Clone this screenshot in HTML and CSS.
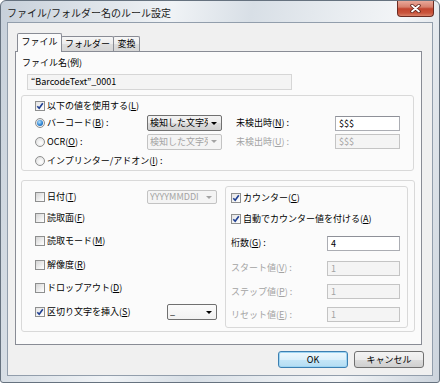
FILE: index.html
```html
<!DOCTYPE html>
<html>
<head>
    <meta charset="utf-8">
    <title>ファイル/フォルダー名のルール設定</title>
    <link rel="stylesheet" href="styles.css">
</head>
<body>
<div class="window">
    <div class="titlebar">
        <span class="title">ファイル/フォルダー名のルール設定</span>
        <span class="close">
            <svg width="11" height="9" viewBox="0 0 11 9">
                <path d="M2 1.5 L9 7.5 M9 1.5 L2 7.5" stroke="#5a1e16" stroke-width="3.4" stroke-linecap="round"/>
                <path d="M2 1.5 L9 7.5 M9 1.5 L2 7.5" stroke="#fff" stroke-width="1.8" stroke-linecap="round"/>
            </svg>
        </span>
    </div>
    <div class="client">
        <div class="tabs">
            <span class="tab active">ファイル</span>
            <span class="tab t2">フォルダー</span>
            <span class="tab t3">変換</span>
        </div>
        <div class="panel">
            <div class="caption">ファイル名(例)</div>
            <div class="sample">“BarcodeText”_0001</div>

            <div class="group g1">
                <label class="chk on wide"><i class="box"><svg width="8" height="8" viewBox="0 0 8 8"><path d="M1.3 4.2 L3.2 6.3 L6.8 1.2" fill="none" stroke="#1f3f92" stroke-width="1.6"/></svg></i>以下の値を使用する(<u>L</u>)</label>

                <label class="chk"><i class="rad on"></i>バーコード(<u>B</u>) :</label>
                <span class="sel"><span class="val">検知した文字列</span><i class="arr"></i></span>
                <span class="lbl">未検出時(<u>N</u>) :</span>
                <span class="inp">$$$</span>

                <label class="chk"><i class="rad"></i>OCR(<u>O</u>) :</label>
                <span class="sel off"><span class="val">検知した文字列</span><i class="arr"></i></span>
                <span class="lbl off">未検出時(<u>U</u>) :</span>
                <span class="inp off">$$$</span>

                <label class="chk wide"><i class="rad"></i>インプリンター/アドオン(<u>I</u>) :</label>
            </div>

            <div class="group g2">
                <div class="left">
                    <label class="chk"><i class="box"></i>日付(<u>T</u>)</label>
                    <span class="sel off short"><span class="val">YYYYMMDDI</span><i class="arr"></i></span>
                    <label class="chk wide"><i class="box"></i>読取面(<u>F</u>)</label>
                    <label class="chk wide"><i class="box"></i>読取モード(<u>M</u>)</label>
                    <label class="chk wide"><i class="box"></i>解像度(<u>R</u>)</label>
                    <label class="chk wide"><i class="box"></i>ドロップアウト(<u>D</u>)</label>
                    <label class="chk on"><i class="box"><svg width="8" height="8" viewBox="0 0 8 8"><path d="M1.3 4.2 L3.2 6.3 L6.8 1.2" fill="none" stroke="#1f3f92" stroke-width="1.6"/></svg></i>区切り文字を挿入(<u>S</u>)</label>
                    <span class="sel sep"><span class="val">_</span><i class="arr"></i></span>
                </div>

                <div class="group counter">
                    <label class="chk on wide"><i class="box"><svg width="8" height="8" viewBox="0 0 8 8"><path d="M1.3 4.2 L3.2 6.3 L6.8 1.2" fill="none" stroke="#1f3f92" stroke-width="1.6"/></svg></i>カウンター(<u>C</u>)</label>
                    <label class="chk on wide"><i class="box"><svg width="8" height="8" viewBox="0 0 8 8"><path d="M1.3 4.2 L3.2 6.3 L6.8 1.2" fill="none" stroke="#1f3f92" stroke-width="1.6"/></svg></i>自動でカウンター値を付ける(<u>A</u>)</label>
                    <span class="lbl">桁数(<u>G</u>) :</span>
                    <span class="inp">4</span>
                    <span class="lbl off">スタート値(<u>V</u>) :</span>
                    <span class="inp off">1</span>
                    <span class="lbl off">ステップ値(<u>P</u>) :</span>
                    <span class="inp off">1</span>
                    <span class="lbl off">リセット値(<u>E</u>) :</span>
                    <span class="inp off">1</span>
                </div>
            </div>
        </div>
        <div class="buttons">
            <span class="btn default">OK</span>
            <span class="btn">キャンセル</span>
        </div>
    </div>
</div>
</body>
</html>
```

FILE: styles.css
```css
*{margin:0;padding:0;box-sizing:border-box;}
body{background:#fff;font:9px/12px "Noto Sans CJK JP","Noto Sans",sans-serif;color:#000;}
u{text-decoration:underline;text-underline-offset:1px;}

.window{
    width:440px;
    height:383px;
    border:1px solid #66727f;
    border-radius:6px 6px 3px 3px;
    background:linear-gradient(100deg,#c7d0da 0%,#dde3e9 18%,#f0f3f6 34%,#d8dfe6 50%,#e9edf1 68%,#f3f5f7 80%,#ccd4dd 100%);
    padding:0 6px 6px;
    display:flex;
    flex-direction:column;
}
.titlebar{height:21px;display:flex;justify-content:space-between;align-items:flex-start;}
.title{font-size:10px;line-height:12px;padding-top:6px;color:#1a1a1a;}
.close{
    width:37px;
    height:16px;
    margin-right:-1px;
    border:1px solid #6b2b22;
    border-top:none;
    border-radius:0 0 4px 4px;
    background:linear-gradient(#e9a899 0%,#d7806d 40%,#c2452f 52%,#c9543c 80%,#d9826a 100%);
    display:flex;
    align-items:center;
    justify-content:center;
}

.client{
    flex:1;
    border:1px solid #929eac;
    background:#f0f0f0;
    display:flex;
    flex-direction:column;
}
.tabs{display:flex;align-items:flex-end;height:18px;margin:10px 0 0 9px;position:relative;z-index:1;}
.tab{
    height:15px;
    border:1px solid #898c95;
    border-bottom:none;
    background:linear-gradient(#f7f7f7,#ececec 50%,#dedede 51%,#d6d6d6);
    text-align:center;
    line-height:13px;
    border-radius:2px 2px 0 0;
}
.tab.active{width:45px;height:19px;margin-bottom:-1px;background:#fbfbfb;line-height:16px;}
.t2{width:53px;margin-left:-1px;}
.t3{width:27px;margin-left:-1px;}

.panel{
    margin:0 10px 0 7px;
    height:294px;
    border:1px solid #898c95;
    background:#fbfbfb;
    padding:4px 0 0 5px;
}
.caption{height:14px;line-height:14px;padding-left:1px;}
.sample{
    margin:4px 0 0 6px;
    width:265px;
    height:16px;
    border:1px solid #d6d6d6;
    background:#f4f4f4;
    padding-left:3px;
    line-height:14px;
}
.group{border:1px solid #d9d9d9;border-radius:3px;}
.g1{
    margin-top:5px;
    width:393px;
    height:76px;
    padding:2px 0 0 13px;
    display:grid;
    grid-template-columns:112px 89px 99px 65px;
    grid-template-rows:16px 18px 19px 19px;
    align-items:center;
}
.wide{grid-column:1 / -1;}

.chk{display:flex;align-items:center;white-space:nowrap;}
.box{
    width:10px;
    height:10px;
    margin-right:2px;
    border:1px solid #8e8f8f;
    background:linear-gradient(135deg,#d4d4d4,#f4f4f4 70%,#fff);
    display:flex;
    align-items:center;
    justify-content:center;
    flex:none;
}
.chk.on .box{background:linear-gradient(135deg,#e4e4e4,#fff);}
.rad{
    width:10px;
    height:10px;
    margin-right:2px;
    border:1px solid #8e8f8f;
    border-radius:50%;
    background:radial-gradient(circle at 60% 60%,#fff,#dadada);
    display:flex;
    align-items:center;
    justify-content:center;
    flex:none;
}
.rad.on::after{
    content:"";
    width:6px;
    height:6px;
    border-radius:50%;
    background:radial-gradient(circle at 40% 35%,#b8e2fb,#2f86d6 55%,#0d4c98);
}

.sel{
    display:flex;
    align-items:center;
    width:75px;
    height:16px;
    border:1px solid #707070;
    border-radius:2px;
    background:linear-gradient(#f3f3f3,#ebebeb 50%,#dcdcdc 51%,#d0d0d0);
    padding-left:2px;
    overflow:hidden;
}
.sel .val{flex:1;overflow:hidden;white-space:nowrap;}
.arr{
    flex:none;
    width:0;
    height:0;
    margin:0 4px 0 3px;
    border-left:3px solid transparent;
    border-right:3px solid transparent;
    border-top:3px solid #000;
}
.sel.off{border-color:#c3c3c3;background:#f4f4f4;color:#a3a3a3;}
.sel.off .arr{border-top-color:#a3a3a3;}
.sel.short{width:70px;height:14px;}
.sel.sep{width:50px;justify-self:end;background:linear-gradient(#fbfbfb,#f1f1f1);}

.lbl{white-space:nowrap;}
.off{color:#a3a3a3;}
.inp{
    height:15px;
    border:1px solid #abadb3;
    border-top-color:#8e9098;
    background:#fff;
    padding-left:3px;
    line-height:13px;
}
.inp.off{border-color:#c4c4c4;background:#f4f4f4;}

.g2{margin-top:9px;width:394px;height:152px;display:flex;}
.left{
    width:203px;
    padding:6px 0 0 13px;
    display:grid;
    grid-template-columns:112px 70px;
    grid-template-rows:20px 22px 24px 23px 24px 24px;
    align-content:start;
    align-items:center;
}
.counter{
    margin-top:5px;
    width:183px;
    height:142px;
    padding:1px 0 0 5px;
    display:grid;
    grid-template-columns:96px 73px;
    grid-template-rows:20px 22px 26px 24px 23px 23px;
    align-content:start;
    align-items:center;
}

.buttons{display:flex;justify-content:flex-end;gap:6px;margin:6px 8px 0 0;}
.btn{
    width:70px;
    height:17px;
    border:1px solid #707070;
    border-radius:3px;
    background:linear-gradient(#f3f3f3,#ebebeb 50%,#dddddd 51%,#cfcfcf);
    text-align:center;
    line-height:15px;
}
.btn.default{
    border-color:#3c7fb1;
    background:linear-gradient(#eef8fd,#dbf0fb 50%,#c4e6f8 51%,#b4dcf2);
    box-shadow:inset 0 0 0 1px #9ed5f3;
}
```
